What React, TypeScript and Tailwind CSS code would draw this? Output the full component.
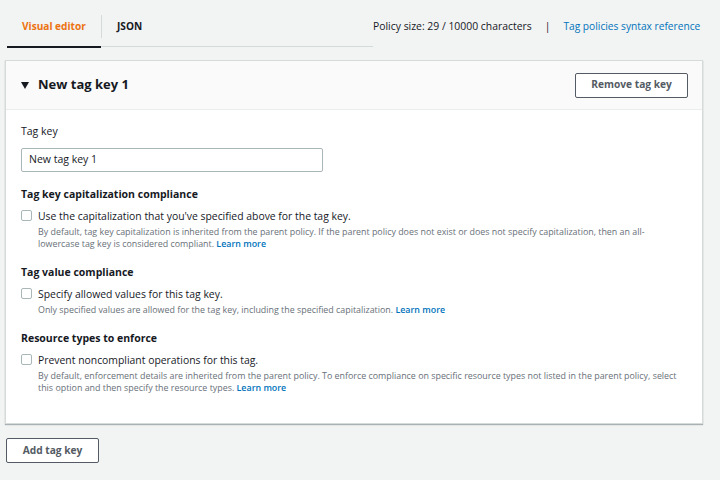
import { useState } from 'react'

const font = { fontFamily: '"Open Sans", "Noto Sans", Arial, sans-serif' }

function Section({
  title,
  label,
  children,
}: {
  title: string
  label: string
  children: React.ReactNode
}) {
  const [checked, setChecked] = useState(false)
  return (
    <div>
      <div className="text-[10.5px] font-bold text-[#16191f] leading-[14px]">{title}</div>
      <div className="mt-[8px] flex items-start gap-[6px]">
        <button
          onClick={() => setChecked(!checked)}
          className="mt-[1px] w-[11px] h-[11px] shrink-0 rounded-[2px] border border-[#aab7b8] bg-white"
        />
        <div>
          <div className="text-[10.4px] text-[#16191f] leading-[14px]">{label}</div>
          <div className="mt-[3px] text-[8.9px] text-[#687078] leading-[12px]">{children}</div>
        </div>
      </div>
    </div>
  )
}

function LearnMore() {
  return <a className="text-[#0073bb] font-semibold">Learn more</a>
}

export default function App() {
  return (
    <div className="w-[720px] h-[480px] bg-[#f2f3f3] overflow-hidden" style={font}>
      {/* Tabs + policy size */}
      <div className="flex items-start pt-[15px]">
        <div className="ml-[7px] w-[366px]">
          <div className="flex items-center h-[23px]">
            <div className="w-[94px] pl-[15px] text-[10.1px] font-bold text-[#ec7211]">Visual editor</div>
            <div className="w-px h-[23px] bg-[#d5dbdb]" />
            <div className="pl-[15px] text-[10.1px] font-bold text-[#16191f]">JSON</div>
          </div>
          <div className="mt-[8px] flex h-[2px] items-start">
            <div className="w-[94px] h-[2px] bg-[#16191f]" />
            <div className="flex-1 h-px bg-[#d5dbdb]" />
          </div>
        </div>
        <div className="flex items-center h-[23px] text-[10.4px] text-[#16191f]">
          <span>Policy size: 29 / 10000 characters</span>
          <span className="mx-[13px]">|</span>
          <a className="text-[#0073bb] text-[10.2px]">Tag policies syntax reference</a>
        </div>
      </div>

      {/* Card */}
      <div className="mt-[12px] ml-[5px] w-[698px] bg-white border border-[#d5dbdb] shadow-[0_1px_1px_rgba(0,28,36,0.3)]">
        <div className="h-[49px] flex items-center justify-between pl-[15px] pr-[14px] bg-[#fafafa] border-b border-[#eaeded]">
          <div className="flex items-center gap-[9px]">
            <svg width="8" height="7" viewBox="0 0 8 7">
              <path d="M0 0 H8 L4 7 Z" fill="#16191f" />
            </svg>
            <span className="text-[13px] font-bold text-[#16191f]">New tag key 1</span>
          </div>
          <button className="w-[113px] h-[25px] border border-[#545b64] rounded-[2px] bg-white text-[10.2px] font-bold text-[#545b64]">
            Remove tag key
          </button>
        </div>

        <div className="pl-[15px] pr-[20px] pt-[14px] pb-[29px]">
          <div className="text-[10.5px] text-[#16191f] leading-[14px]">Tag key</div>
          <div className="mt-[10px] w-[302px] h-[24px] border border-[#aab7b8] rounded-[2px] flex items-center px-[7px] text-[10.5px] text-[#16191f]">
            New tag key 1
          </div>

          <div className="mt-[15px] flex flex-col gap-[15px]">
            <Section title="Tag key capitalization compliance" label="Use the capitalization that you've specified above for the tag key.">
              By default, tag key capitalization is inherited from the parent policy. If the parent policy does not exist or does not specify capitalization, then an all-lowercase tag key is considered compliant. <LearnMore />
            </Section>
            <Section title="Tag value compliance" label="Specify allowed values for this tag key.">
              Only specified values are allowed for the tag key, including the specified capitalization. <LearnMore />
            </Section>
            <Section title="Resource types to enforce" label="Prevent noncompliant operations for this tag.">
              By default, enforcement details are inherited from the parent policy. To enforce compliance on specific resource types not listed in the parent policy, select this option and then specify the resource types. <LearnMore />
            </Section>
          </div>
        </div>
      </div>

      <button className="mt-[14px] ml-[6px] w-[93px] h-[25px] border border-[#545b64] rounded-[2px] bg-white text-[10.2px] font-bold text-[#545b64]">
        Add tag key
      </button>
    </div>
  )
}
